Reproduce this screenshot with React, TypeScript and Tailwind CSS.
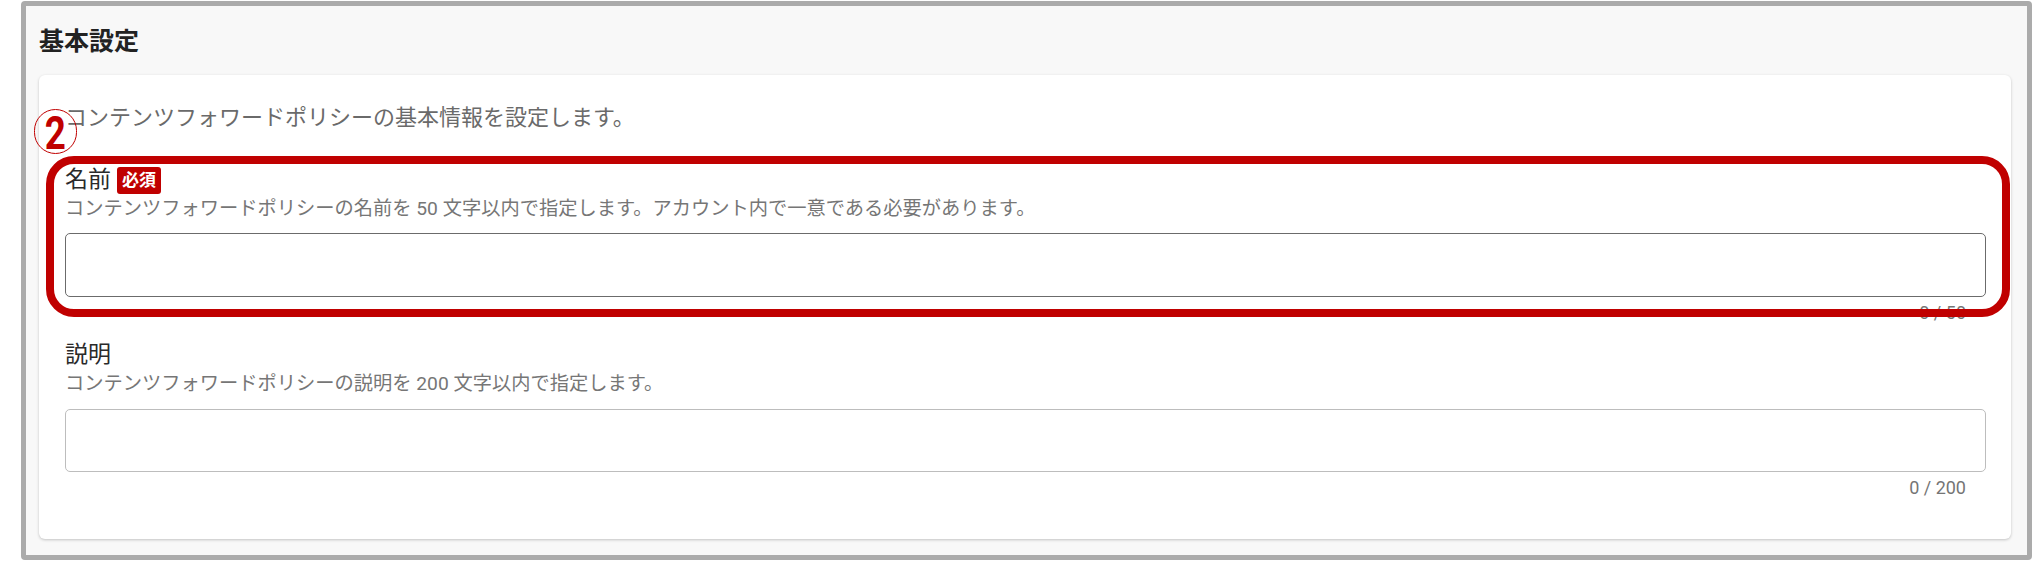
import React from "react";

type Field = {
  label: string;
  required?: boolean;
  hint: string;
  max: number;
  inputClass: string;
  gapTop: string;
  inputGap: string;
};

const fields: Field[] = [
  {
    label: "名前",
    required: true,
    hint: "コンテンツフォワードポリシーの名前を 50 文字以内で指定します。アカウント内で一意である必要があります。",
    max: 50,
    inputClass: "h-[64px] border-[1.5px] border-[#6b6b6b]",
    gapTop: "mt-[31px]",
    inputGap: "mt-[10px]",
  },
  {
    label: "説明",
    hint: "コンテンツフォワードポリシーの説明を 200 文字以内で指定します。",
    max: 200,
    inputClass: "h-[63px] border border-[#bdbdbd]",
    gapTop: "mt-[15px]",
    inputGap: "mt-[11px]",
  },
];

function FormField({ f }: { f: Field }) {
  return (
    <div className={f.gapTop}>
      <div className="flex items-center h-[30px]">
        <span className="text-[23px] leading-[30px] text-[#2a2a2a]">{f.label}</span>
        {f.required && (
          <span className="ml-[6px] h-[27px] px-[5px] rounded-[3px] bg-[#c00000] text-white text-[17px] font-bold leading-[27px]">
            必須
          </span>
        )}
      </div>
      <p className="text-[19.25px] leading-[28px] text-[#767676]">{f.hint}</p>
      <div className={`${f.inputGap} w-full rounded-[5px] bg-white ${f.inputClass}`} />
      <p className="mt-[4px] pr-[20px] text-right text-[18px] leading-[24px] text-[#757575]">
        0 / {f.max}
      </p>
    </div>
  );
}

export default function App() {
  return (
    <div className="relative w-[2034px] h-[561px] bg-white pl-[21px] pt-[1px] font-['Roboto','Noto_Sans_CJK_JP',sans-serif]">
      <section className="w-[2011px] h-[559px] border-[5px] border-[#ababab] rounded-[4px] bg-[#f8f8f8] pl-[13px] pr-[16px]">
        <h2 className="mt-[18px] text-[25px] leading-[36px] font-bold text-[#222]">基本設定</h2>

        <div className="mt-[15px] rounded-[6px] bg-white shadow-[0_1px_3px_rgba(0,0,0,0.22)] pt-[26px] pb-[39px] pl-[26px] pr-[25px]">
          <p className="text-[22px] leading-[33px] text-[#6a6a6a]">
            コンテンツフォワードポリシーの基本情報を設定します。
          </p>
          {fields.map((f) => (
            <FormField key={f.label} f={f} />
          ))}
        </div>
      </section>

      {/* annotation overlays */}
      <div className="absolute left-[46px] top-[156px] w-[1964px] h-[161px] border-[8px] border-[#c00000] rounded-[28px] pointer-events-none" />
      <div className="absolute left-[34px] top-[109px] w-[43px] h-[45px] rounded-full border-[1.5px] border-[#c00000] flex items-center justify-center">
        <span className="text-[46px] leading-none font-bold text-[#c00000] scale-x-[0.8] translate-y-[1px]">2</span>
      </div>
    </div>
  );
}
